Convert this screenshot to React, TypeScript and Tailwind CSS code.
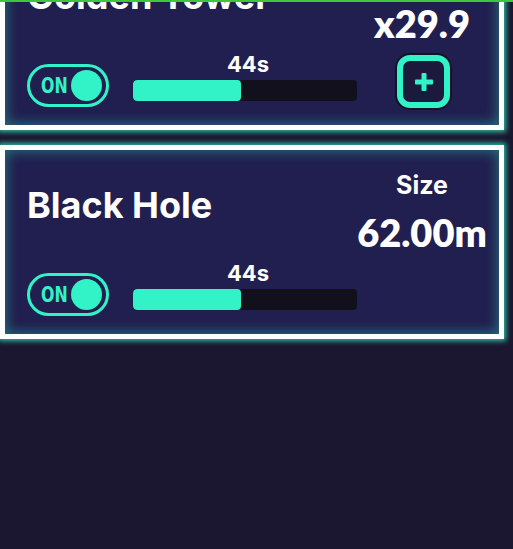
import React from 'react';

interface Ability {
    name: string;
    label: string;
    value: string;
    timer: string;
    progress: number;
    upgradable?: boolean;
}

const abilities: Ability[] = [
    { name: 'Golden Tower', label: 'Bonus', value: 'x29.9', timer: '44s', progress: 48, upgradable: true },
    { name: 'Black Hole', label: 'Size', value: '62.00m', timer: '44s', progress: 48 },
];

const numberFont = { fontFamily: 'Lato, Inter, sans-serif' };

function Toggle() {
    return (
        <div className="mt-[11px] flex h-[43px] w-[82px] items-center justify-between rounded-full border-[3px] border-[#31f3c7] pl-[11px] pr-[4px]">
            <span
                className="inline-block w-[24px] origin-left scale-x-[0.72] text-[22px] font-bold leading-none text-[#31f3c7]"
                style={{ fontFamily: '"DejaVu Sans", sans-serif' }}
            >
                ON
            </span>
            <span className="h-[31px] w-[31px] rounded-full bg-[#31f3c7]" />
        </div>
    );
}

function PlusButton() {
    return (
        <button className="mt-[2px] mr-[49px] ml-auto flex h-[53px] w-[53px] items-center justify-center rounded-[13px] border-[6px] border-[#31f3c7] bg-[#1c1a3c] shadow-[0_0_0_2px_#141228]">
            <svg width="18" height="18" viewBox="0 0 18 18" fill="#31f3c7">
                <rect x="6.5" y="0" width="5" height="18" rx="1" />
                <rect x="0" y="6.5" width="18" height="5" rx="1" />
            </svg>
        </button>
    );
}

function AbilityCard({ item }: { item: Ability }) {
    return (
        <div className="box-border flex h-[194px] w-[504px] flex-col border-[5px] border-white bg-[#211f4f] pl-[22px] shadow-[0_0_5px_2px_rgba(49,243,199,0.75),inset_0_0_12px_2px_rgba(49,243,199,0.35)]">
            <div className="flex h-[112px] shrink-0 justify-between">
                <h2 className="mt-[37px] text-[36px] font-bold leading-none text-white">{item.name}</h2>
                <div className="mr-[7px] flex w-[140px] flex-col items-center text-white">
                    <span className="mt-[23px] text-[25px] font-bold leading-none">{item.label}</span>
                    <span className="mt-[15px] text-[38px] font-extrabold leading-none" style={numberFont}>
                        {item.value}
                    </span>
                </div>
            </div>
            <div className="flex items-start">
                <Toggle />
                <div className="ml-[24px] flex w-[224px] flex-col items-center">
                    <span className="pl-[6px] text-[22px] font-bold leading-none text-white">{item.timer}</span>
                    <div className="mt-[5px] h-[21px] w-full overflow-hidden rounded-[4px] bg-[#11101c]">
                        <div className="h-full rounded-[4px] bg-[#31f3c7]" style={{ width: `${item.progress}%` }} />
                    </div>
                </div>
                {item.upgradable && <PlusButton />}
            </div>
        </div>
    );
}

export default function App() {
    return (
        <div
            className="relative h-[549px] w-[513px] overflow-hidden bg-[#1b1730]"
            style={{ fontFamily: 'Inter, "Noto Sans", sans-serif' }}
        >
            <div className="absolute top-0 left-0 z-10 h-[2px] w-full bg-[#3cc83a]" />
            <div className="mt-[-64px] flex flex-col gap-[15px]">
                {abilities.map((item) => (
                    <AbilityCard key={item.name} item={item} />
                ))}
            </div>
        </div>
    );
}
